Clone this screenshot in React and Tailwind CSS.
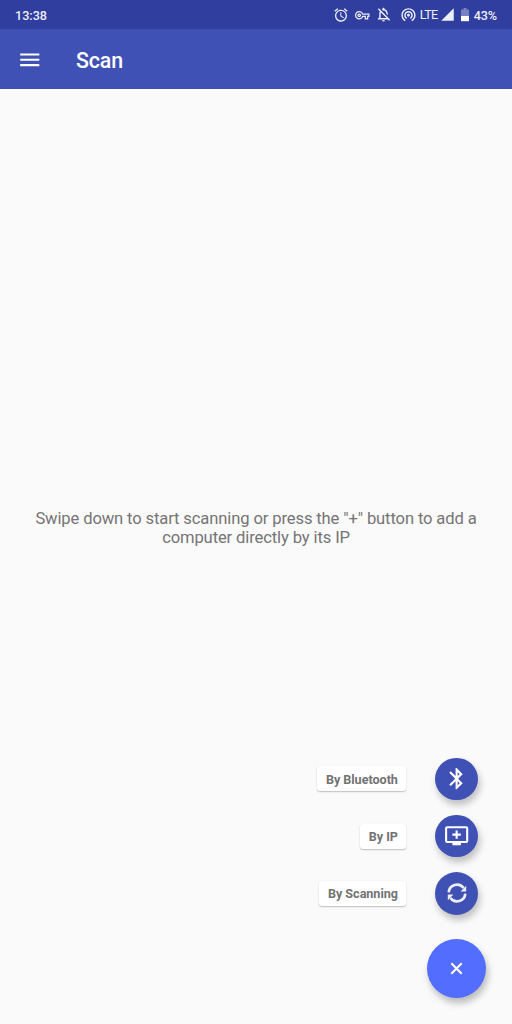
import { MdAlarm, MdOutlineVpnKey, MdWifiTethering, MdSignalCellular4Bar, MdBluetooth, MdAddToQueue, MdMenu, MdOutlineNotificationsOff } from "react-icons/md";

function SyncIcon() {
  return (
    <svg width="22" height="22" viewBox="0 0 22 22" fill="none">
      <path d="M2.7 10.4A8.3 8.3 0 0 1 17.6 6" stroke="#eeeff6" strokeWidth="2.7" />
      <path d="M19.3 11.6A8.3 8.3 0 0 1 4.4 16" stroke="#eeeff6" strokeWidth="2.7" />
      <path d="M20.2 3.8V9.4H14.6Z" fill="#eeeff6" />
      <path d="M1.8 18.2V12.6H7.4Z" fill="#eeeff6" />
    </svg>
  );
}

function BatteryIcon() {
  return (
    <svg width="8" height="14" viewBox="0 0 8 14">
      <path d="M2.5 0h3v1.4H8V8H0V1.4h2.5z" fill="#fff" fillOpacity=".35" />
      <path d="M0 8h8v5.2H0z" fill="#fff" />
    </svg>
  );
}

function StatusBar() {
  return (
    <div className="flex h-[29px] items-center bg-[#303f9f] pl-[15px] pr-[15px] pt-px text-[12.6px] font-medium text-[#eceef8]">
      <span className="pt-[2px]">13:38</span>
      <div className="ml-auto flex items-center">
        <MdAlarm size={16} />
        <MdOutlineVpnKey size={14.5} className="ml-[6px]" />
        <MdOutlineNotificationsOff size={17} className="ml-[5px]" />
        <MdWifiTethering size={17} className="ml-[8px]" />
        <span className="ml-[3px] w-[19px] pt-px text-[12.6px] font-normal tracking-[-0.6px]">LTE</span>
        <MdSignalCellular4Bar size={15} className="ml-px" />
        <span className="ml-[6px] mr-[5px]"><BatteryIcon /></span>
        <span className="pt-[2px] tracking-[-0.1px]">43%</span>
      </div>
    </div>
  );
}

function ActionRow({ label, children }) {
  return (
    <div className="flex h-[42.5px] items-center">
      <div className="flex h-[25px] items-center rounded-[3px] bg-white px-[8.5px] pt-[3px] text-[12.6px] font-bold tracking-[-0.03px] text-[#737373] shadow-[0_1px_1.5px_rgba(0,0,0,0.24),0_0_1px_rgba(0,0,0,0.06)]">
        {label}
      </div>
      <button className="ml-[29px] flex h-[42.5px] w-[42.5px] items-center justify-center rounded-full bg-[#3f51b5] text-white shadow-[2px_5px_7px_rgba(0,0,0,0.24)]">
        {children}
      </button>
    </div>
  );
}

export default function App() {
  return (
    <div className="relative flex h-[1024px] w-[512px] flex-col overflow-hidden bg-[#fafafa] font-['Roboto',sans-serif]">
      <StatusBar />
      <header className="flex h-[60px] items-center bg-[#3f51b5] pl-[17px] text-white">
        <MdMenu size={25.5} className="relative top-[0.5px]" />
        <h1 className="ml-[33.5px] pt-[4px] text-[21.4px] font-medium tracking-[-0.15px]">Scan</h1>
      </header>
      <main className="flex flex-1 justify-center pt-[420px]">
        <p className="w-[460px] text-center text-[16.6px] leading-[19px] tracking-[-0.13px] text-[#757575]">
          Swipe down to start scanning or press the "+" button to add a computer directly by its IP
        </p>
      </main>
      <div className="absolute right-[25.6px] bottom-[25.6px] flex flex-col items-end">
        <div className="mr-[8.5px] mb-[24.3px] flex flex-col items-end gap-[14.8px]">
          <ActionRow label="By Bluetooth"><MdBluetooth size={25.3} /></ActionRow>
          <ActionRow label="By IP"><MdAddToQueue size={25.3} /></ActionRow>
          <ActionRow label="By Scanning"><SyncIcon /></ActionRow>
        </div>
        <button className="flex h-[59.5px] w-[59.5px] items-center justify-center rounded-full bg-[#536dfe] shadow-[2px_5px_7px_rgba(0,0,0,0.26)]">
          <svg width="25" height="25" viewBox="0 0 25 25" stroke="#fff" strokeWidth="2.1">
            <path d="M7.3 7.3l10.4 10.4M17.7 7.3L7.3 17.7" />
          </svg>
        </button>
      </div>
    </div>
  );
}
